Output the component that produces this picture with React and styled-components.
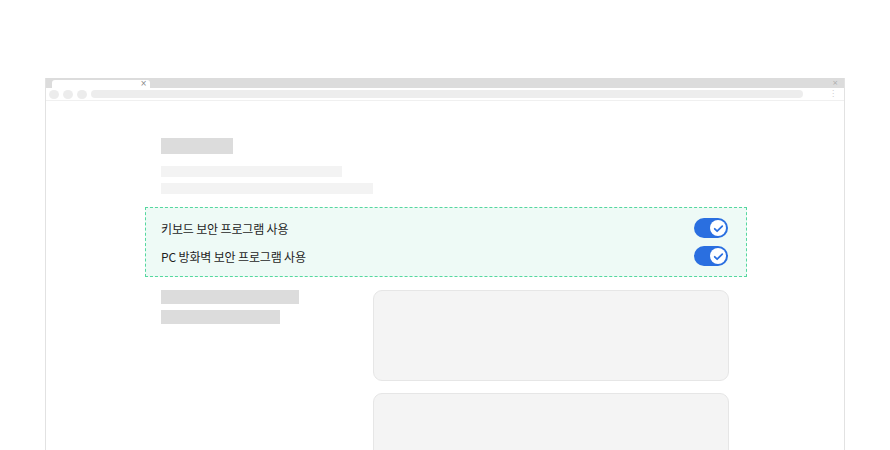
import styled, { createGlobalStyle } from "styled-components";

const GlobalStyle = createGlobalStyle`
  html, body {
    margin: 0;
    padding: 0;
    background: #ffffff;
    font-family: "Noto Sans CJK KR", "Noto Sans", sans-serif;
  }
`;

const settings = [
  { label: "키보드 보안 프로그램 사용", on: true },
  { label: "PC 방화벽 보안 프로그램 사용", on: true },
];

const Check = () => (
  <svg width="13" height="13" viewBox="0 0 24 24" fill="none">
    <path d="M5 12.5l4.5 4.5L19 7.5" stroke="#2a6fe0" strokeWidth="3.2" strokeLinecap="round" strokeLinejoin="round" />
  </svg>
);

const App = () => {
  return (
    <>
      <GlobalStyle />
      <Page>
        <Window>
          <TabStrip>
            <Tab>
              <TabClose>×</TabClose>
            </Tab>
            <StripClose>×</StripClose>
          </TabStrip>
          <Toolbar>
            <Dot />
            <Dot />
            <Dot />
            <Address />
            <Kebab>⋮</Kebab>
          </Toolbar>

          <Content>
            <Skeleton $w={72} $h={16} $tone="dark" />
            <Lines>
              <Skeleton $w={181} $h={11} />
              <Skeleton $w={212} $h={11} />
            </Lines>

            <Highlight>
              {settings.map((s) => (
                <Row key={s.label}>
                  <Label>{s.label}</Label>
                  <Toggle $on={s.on}>
                    <Knob>
                      <Check />
                    </Knob>
                  </Toggle>
                </Row>
              ))}
            </Highlight>

            <Columns>
              <Lines $gap={6}>
                <Skeleton $w={138} $h={14} $tone="dark" />
                <Skeleton $w={119} $h={14} $tone="dark" />
              </Lines>
              <Cards>
                <Card />
                <Card />
              </Cards>
            </Columns>
          </Content>
        </Window>
      </Page>
    </>
  );
};

const Page = styled.div`
  width: 890px;
  height: 450px;
  overflow: hidden;
  padding: 78px 0 0 45px;
  box-sizing: border-box;
`;

const Window = styled.div`
  width: 800px;
  height: 400px;
  border: 1px solid #e2e2e2;
  border-top: none;
  box-sizing: border-box;
  background: #fff;
`;

const TabStrip = styled.div`
  height: 10px;
  background: #dcdcdc;
  display: flex;
  align-items: flex-end;
  padding-left: 6px;
`;

const Tab = styled.div`
  width: 98px;
  height: 8px;
  background: #fff;
  border-radius: 3px 3px 0 0;
  display: flex;
  justify-content: flex-end;
  align-items: center;
  padding-right: 3px;
  box-sizing: border-box;
`;

const TabClose = styled.span`
  font-size: 8px;
  line-height: 8px;
  color: #888;
  font-family: "DejaVu Sans", sans-serif;
`;

const StripClose = styled.span`
  margin-left: auto;
  margin-right: 6px;
  align-self: center;
  font-size: 7px;
  line-height: 7px;
  color: #aaa;
  font-family: "DejaVu Sans", sans-serif;
`;

const Toolbar = styled.div`
  height: 12px;
  display: flex;
  align-items: center;
  gap: 4px;
  padding: 0 3px;
  border-bottom: 1px solid #f0f0f0;
`;

const Dot = styled.div`
  width: 10px;
  height: 9px;
  border-radius: 50%;
  background: #ececec;
`;

const Address = styled.div`
  flex: 1;
  height: 8px;
  margin-right: 22px;
  border-radius: 4px;
  background: #ededed;
`;

const Kebab = styled.span`
  font-size: 8px;
  line-height: 8px;
  color: #ccc;
  margin-right: 4px;
  font-family: "DejaVu Sans", sans-serif;
`;

const Content = styled.div`
  width: 568px;
  margin-left: 115px;
  padding-top: 37px;
  display: flex;
  flex-direction: column;
`;

const Skeleton = styled.div`
  width: ${(p) => p.$w}px;
  height: ${(p) => p.$h}px;
  background: ${(p) => (p.$tone === "dark" ? "#dcdcdc" : "#f3f3f3")};
`;

const Lines = styled.div`
  display: flex;
  flex-direction: column;
  gap: ${(p) => p.$gap ?? 6}px;
  margin-top: ${(p) => (p.$gap ? 0 : 12)}px;
`;

const Highlight = styled.div`
  margin: 13px -18px 0 -16px;
  padding: 6px 18px 6px 15px;
  border: 1px dashed #55d89f;
  background: #eefaf6;
  display: flex;
  flex-direction: column;
`;

const Row = styled.div`
  height: 28px;
  display: flex;
  align-items: center;
  justify-content: space-between;
`;

const Label = styled.span`
  font-size: 12px;
  color: #1e1e1e;
  letter-spacing: -0.15px;
`;

const Toggle = styled.div`
  width: 34px;
  height: 20px;
  border-radius: 10px;
  background: ${(p) => (p.$on ? "#2a6fe0" : "#cfcfcf")};
  display: flex;
  align-items: center;
  justify-content: ${(p) => (p.$on ? "flex-end" : "flex-start")};
  padding: 0 2px;
  box-sizing: border-box;
`;

const Knob = styled.div`
  width: 16px;
  height: 16px;
  border-radius: 50%;
  background: #fff;
  display: flex;
  align-items: center;
  justify-content: center;
`;

const Columns = styled.div`
  margin-top: 13px;
  display: grid;
  grid-template-columns: 212px 356px;
`;

const Cards = styled.div`
  display: flex;
  flex-direction: column;
  gap: 12px;
`;

const Card = styled.div`
  height: 91px;
  border-radius: 9px;
  border: 1px solid #e6e6e6;
  background: #f4f4f4;
  box-sizing: border-box;
`;

export default App;
